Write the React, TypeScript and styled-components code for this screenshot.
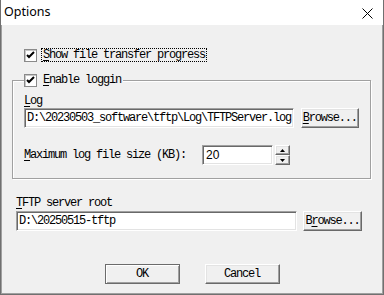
import React from "react";
import styled, { createGlobalStyle, css } from "styled-components";

const GlobalStyle = createGlobalStyle`
  html, body {
    margin: 0;
    padding: 0;
    background: #ffffff;
  }
  body {
    font-family: "Liberation Mono", "DejaVu Sans Mono", monospace;
    font-size: 12px;
    color: #000;
  }
`;

const dosFont = css`
  font-family: "Liberation Mono", "DejaVu Sans Mono", monospace;
  font-size: 12px;
  letter-spacing: -1.2px;
  color: #000;
`;

const raised = css`
  background: #f0f0f0;
  border-style: solid;
  border-width: 1px;
  border-color: #ffffff #696969 #696969 #ffffff;
  box-shadow: inset -1px -1px 0 #a0a0a0, inset 1px 1px 0 #e3e3e3;
`;

const sunken = css`
  background: #ffffff;
  border-style: solid;
  border-width: 1px;
  border-color: #a0a0a0 #ffffff #ffffff #a0a0a0;
  box-shadow: inset 1px 1px 0 #696969, inset -1px -1px 0 #e3e3e3;
`;

const Window = styled.div`
  width: 384px;
  height: 295px;
  box-sizing: border-box;
  border: 1px solid #707070;
  border-top: none;
  background: #f0f0f0;
  display: flex;
  flex-direction: column;
  overflow: hidden;
`;

const TitleBar = styled.div`
  height: 25px;
  flex: none;
  background: #ffffff;
  display: flex;
  align-items: center;
  justify-content: space-between;
  padding: 0 10px 0 3px;
`;

const Title = styled.span`
  font-family: "Noto Sans", "Open Sans", sans-serif;
  font-size: 12.5px;
  color: #000;
  line-height: 16px;
  margin-top: -1px;
`;

const CloseIcon = styled.svg`
  width: 11px;
  height: 11px;
  display: block;
  margin-top: 2px;
`;

const Body = styled.div`
  flex: 1;
  display: flex;
  flex-direction: column;
  box-shadow: inset 1px 0 0 #a0a0a0, inset -1px 0 0 #a0a0a0, inset 0 -1px 0 #a0a0a0;
`;

const CheckRow = styled.label`
  display: flex;
  align-items: center;
  gap: 4px;
  margin: 23px 0 0 23px;
`;

const Box = styled.span`
  width: 13px;
  height: 13px;
  box-sizing: border-box;
  flex: none;
  display: flex;
  align-items: center;
  justify-content: center;
  background: #ffffff;
  border: 1px solid #8a8a8a;
  box-shadow: inset 1px 1px 0 #c8c8c8;
`;

const CheckText = styled.span<{ $focused?: boolean }>`
  ${dosFont};
  line-height: 12px;
  white-space: nowrap;
  padding: 0 1px 0 1px;
  border: 1px dotted ${(p) => (p.$focused ? "#000" : "transparent")};
`;

const Key = styled.u`
  text-underline-offset: 2px;
`;

const Group = styled.fieldset`
  margin: 11px 12px 0 11px;
  padding: 0 11px 13px 11px;
  border: 1px solid #a0a0a0;
  box-shadow: 1px 1px 0 #ffffff, inset 1px 1px 0 #ffffff;
  min-inline-size: 0;
`;

const Legend = styled.legend`
  padding: 0;
  margin: 0;
  background: #f0f0f0;
  display: flex;
  align-items: center;
  gap: 4px;
  height: 14px;
`;

const FieldLabel = styled.div<{ $indent?: number; $top?: number }>`
  ${dosFont};
  line-height: 14px;
  height: 14px;
  margin-left: ${(p) => p.$indent ?? 0}px;
  margin-top: ${(p) => p.$top ?? 0}px;
  white-space: nowrap;
`;

const Row = styled.div<{ $indent?: number; $top?: number }>`
  display: flex;
  align-items: center;
  margin-left: ${(p) => p.$indent ?? 0}px;
  margin-top: ${(p) => p.$top ?? 0}px;
`;

const TextBox = styled.div<{ $width: number }>`
  ${sunken};
  ${dosFont};
  width: ${(p) => p.$width}px;
  height: 20px;
  box-sizing: border-box;
  padding-left: 2px;
  line-height: 18px;
  white-space: nowrap;
  overflow: hidden;
`;

const NumberBox = styled(TextBox)`
  font-family: "Liberation Sans", Arial, sans-serif;
  letter-spacing: 0;
  padding-left: 3px;
`;

const Button = styled.button<{ $width: number; $gap?: number; $default?: boolean }>`
  ${raised};
  ${dosFont};
  width: ${(p) => p.$width}px;
  height: 20px;
  margin: 0 0 0 ${(p) => p.$gap ?? 0}px;
  padding: 0;
  line-height: 16px;
  text-align: center;
  cursor: default;
  ${(p) =>
    p.$default &&
    css`
      border-color: #6b6b6b;
      box-shadow: inset 1px 1px 0 #ffffff, inset -1px -1px 0 #a0a0a0;
    `}
`;

const Spinner = styled.div`
  display: flex;
  flex-direction: column;
  margin-left: 2px;
  height: 20px;
`;

const SpinButton = styled.div`
  ${raised};
  width: 15px;
  height: 10px;
  box-sizing: border-box;
  display: flex;
  align-items: center;
  justify-content: center;
`;

const Gap = styled.div<{ $w: number }>`
  width: ${(p) => p.$w}px;
  flex: none;
`;

const ButtonBar = styled.div`
  display: flex;
  justify-content: center;
  gap: 25px;
  margin-top: 33px;
`;

const Check = () => (
  <Box>
    <svg width="9" height="9" viewBox="0 0 9 9">
      <path d="M1 4 L3 6 L8 1" fill="none" stroke="#000" strokeWidth="2" />
    </svg>
  </Box>
);

const Arrow = ({ up }: { up?: boolean }) => (
  <svg width="5" height="3" viewBox="0 0 5 3">
    <path d={up ? "M2.5 0 L5 3 L0 3 Z" : "M0 0 L5 0 L2.5 3 Z"} fill="#000" />
  </svg>
);

export default function App() {
  return (
    <>
      <GlobalStyle />
      <Window>
        <TitleBar>
          <Title>Options</Title>
          <CloseIcon viewBox="0 0 11 11">
            <path d="M0.5 0.5 L10.5 10.5 M10.5 0.5 L0.5 10.5" stroke="#000" strokeWidth="1" />
          </CloseIcon>
        </TitleBar>
        <Body>
          <CheckRow>
            <Check />
            <CheckText $focused>
              <Key>S</Key>how file transfer progress
            </CheckText>
          </CheckRow>

          <Group>
            <Legend>
              <Check />
              <CheckText>
                <Key>E</Key>nable loggin
              </CheckText>
            </Legend>
            <FieldLabel $top={7}>
              <Key>L</Key>og
            </FieldLabel>
            <Row>
              <TextBox $width={272}>D:\20230503_software\tftp\Log\TFTPServer.log</TextBox>
              <Button $width={59} $gap={7}>
                <Key>B</Key>rowse...
              </Button>
            </Row>
            <Row $top={17}>
              <FieldLabel>
                <Key>M</Key>aximum log file size (KB):
              </FieldLabel>
              <Gap $w={16} />
              <NumberBox $width={71}>20</NumberBox>
              <Spinner>
                <SpinButton>
                  <Arrow up />
                </SpinButton>
                <SpinButton>
                  <Arrow />
                </SpinButton>
              </Spinner>
            </Row>
          </Group>

          <FieldLabel $indent={15} $top={17}>
            <Key>T</Key>FTP server root
          </FieldLabel>
          <Row $indent={15} $top={1}>
            <TextBox $width={281}>D:\20250515-tftp</TextBox>
            <Button $width={59} $gap={6}>
              B<Key>r</Key>owse...
            </Button>
          </Row>

          <ButtonBar>
            <Button $width={75} $default>
              OK
            </Button>
            <Button $width={75}>Cancel</Button>
          </ButtonBar>
        </Body>
      </Window>
    </>
  );
}
